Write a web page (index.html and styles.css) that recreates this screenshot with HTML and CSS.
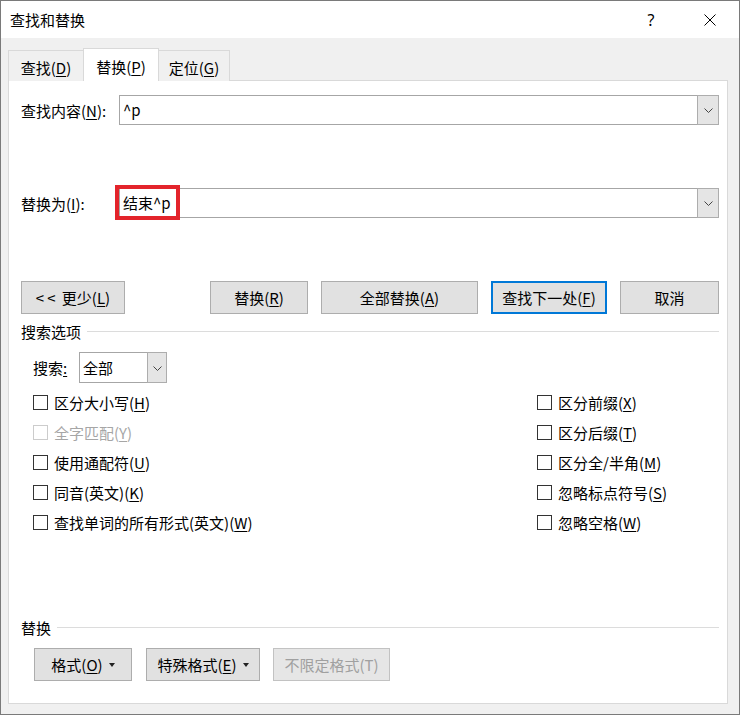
FILE: index.html
```html
<!DOCTYPE html>
<html lang="zh-CN">
<head>
<meta charset="utf-8">
<title>查找和替换</title>
<link rel="stylesheet" href="styles.css">
</head>
<body>
<div class="window">
  <div class="titlebar">
    <span class="title">查找和替换</span>
    <span class="help">?</span>
    <span class="close">
      <svg width="12" height="12" viewBox="0 0 12 12"><path d="M0.5 0.5 L11.5 11.5 M11.5 0.5 L0.5 11.5" stroke="#000" stroke-width="1" fill="none"/></svg>
    </span>
  </div>
  <div class="body">
    <div class="tabs">
      <div class="tab t1"><span>查找(<u>D</u>)</span></div>
      <div class="tab t2 active"><span>替换(<u>P</u>)</span></div>
      <div class="tab t3"><span>定位(<u>G</u>)</span></div>
    </div>
    <div class="panel">
      <div class="field-row">
        <div class="field-label">查找内容(<u>N</u>):</div>
        <div class="combo">
          <div class="val">^p</div>
          <div class="drop"><svg width="9" height="5" viewBox="0 0 9 5"><path d="M0.5 0.5 L4.5 4.5 L8.5 0.5" stroke="#444" stroke-width="1" fill="none"/></svg></div>
        </div>
      </div>
      <div class="field-row replace-row">
        <div class="field-label">替换为(<u>I</u>):</div>
        <div class="combo">
          <div class="val">结束^p</div>
          <div class="drop"><svg width="9" height="5" viewBox="0 0 9 5"><path d="M0.5 0.5 L4.5 4.5 L8.5 0.5" stroke="#444" stroke-width="1" fill="none"/></svg></div>
          <div class="mark"></div>
        </div>
      </div>
      <div class="btn-row">
        <div class="btn b-less"><span><span class="lt">&lt;&lt;</span> 更少(<u>L</u>)</span></div>
        <div class="btn b-rep"><span>替换(<u>R</u>)</span></div>
        <div class="btn b-all"><span>全部替换(<u>A</u>)</span></div>
        <div class="btn b-next focus"><span>查找下一处(<u>F</u>)</span></div>
        <div class="btn b-cancel"><span>取消</span></div>
      </div>
      <div class="group-head">
        <span>搜索选项</span><span class="line"></span>
      </div>
      <div class="search-row">
        <div class="search-label">搜索<u>:</u></div>
        <div class="select">
          <div class="val">全部</div>
          <div class="drop"><svg width="9" height="5" viewBox="0 0 9 5"><path d="M0.5 0.5 L4.5 4.5 L8.5 0.5" stroke="#444" stroke-width="1" fill="none"/></svg></div>
        </div>
      </div>
      <div class="checks">
        <div class="chk"><span class="box"></span><span>区分大小写(<u>H</u>)</span></div>
        <div class="chk disabled"><span class="box"></span><span>全字匹配(<u>Y</u>)</span></div>
        <div class="chk"><span class="box"></span><span>使用通配符(<u>U</u>)</span></div>
        <div class="chk"><span class="box"></span><span>同音(英文)(<u>K</u>)</span></div>
        <div class="chk"><span class="box"></span><span>查找单词的所有形式(英文)(<u>W</u>)</span></div>
        <div class="chk"><span class="box"></span><span>区分前缀(<u>X</u>)</span></div>
        <div class="chk"><span class="box"></span><span>区分后缀(<u>T</u>)</span></div>
        <div class="chk"><span class="box"></span><span>区分全/半角(<u>M</u>)</span></div>
        <div class="chk"><span class="box"></span><span>忽略标点符号(<u>S</u>)</span></div>
        <div class="chk"><span class="box"></span><span>忽略空格(<u>W</u>)</span></div>
      </div>
      <div class="group-head replace-head">
        <span>替换</span><span class="line"></span>
      </div>
      <div class="bottom-row">
        <div class="btn f1"><span>格式(<u>O</u>)</span><span class="tri"></span></div>
        <div class="btn f2"><span>特殊格式(<u>E</u>)</span><span class="tri"></span></div>
        <div class="btn f3 disabled"><span>不限定格式(T)</span></div>
      </div>
    </div>
  </div>
</div>
</body>
</html>
```
FILE: styles.css
```css
* { box-sizing: border-box; }
html, body { margin: 0; padding: 0; }
body {
  width: 740px;
  height: 716px;
  overflow: hidden;
  background: #fff;
  font-family: "Noto Sans CJK SC", sans-serif;
  font-size: 15px;
  color: #000;
}
u { text-underline-offset: 2px; text-decoration-thickness: 1px; }

.window {
  width: 740px;
  height: 715px;
  border: 1px solid #7a7a7a;
  display: flex;
  flex-direction: column;
}

.titlebar {
  height: 37px;
  flex: none;
  display: flex;
  align-items: center;
  padding-left: 9px;
  background: #fff;
}
.title { flex: 1; line-height: 20px; }
.help {
  font-family: "Noto Sans", sans-serif;
  font-size: 16px;
  width: 20px;
  text-align: center;
  margin-right: 43px;
  line-height: 20px;
}
.close {
  width: 12px;
  height: 12px;
  margin-right: 23px;
  display: flex;
}

.body {
  flex: 1;
  background: #f0f0f0;
  padding: 10px 11px 10px 7px;
  display: flex;
  flex-direction: column;
}

.tabs {
  display: flex;
  align-items: flex-end;
  height: 32px;
  flex: none;
}
.tab {
  height: 31px;
  border: 1px solid #d9d9d9;
  border-bottom: none;
  background: #f0f0f0;
  display: flex;
  align-items: center;
  justify-content: center;
  padding-top: 3px;
  margin-bottom: -1px;
  position: relative;
}
.tab + .tab { margin-left: -1px; }
.tab.t1 { width: 76px; }
.tab.t2 { width: 76px; }
.tab.t3 { width: 72px; }
.tab.active {
  height: 33px;
  background: #fff;
  z-index: 1;
  padding-top: 2px;
}

.panel {
  flex: 1;
  background: #fff;
  border: 1px solid #d9d9d9;
  padding: 14px 8px 0 12px;
  display: flex;
  flex-direction: column;
}

.field-row {
  display: flex;
  align-items: center;
  height: 30px;
  flex: none;
}
.replace-row { margin-top: 63px; }
.field-label { width: 98px; }

.combo, .select {
  position: relative;
  height: 30px;
  border: 1px solid #a6a6a6;
  display: flex;
  background: #fff;
}
.combo { flex: 1; }
.val {
  flex: 1;
  padding-left: 3px;
  line-height: 28px;
}
.drop {
  width: 22px;
  margin: -1px -1px -1px 0;
  border: 1px solid #adadad;
  background: #e5e5e5;
  display: flex;
  align-items: center;
  justify-content: center;
  padding-top: 1px;
}
.mark {
  position: absolute;
  left: -5px;
  top: -4px;
  width: 65px;
  height: 35px;
  border: 4px solid #e3242b;
}

.btn-row {
  margin-top: 63px;
  display: flex;
  gap: 13px;
  height: 33px;
  flex: none;
}
.btn {
  height: 33px;
  border: 1px solid #adadad;
  background: #e1e1e1;
  display: flex;
  align-items: center;
  justify-content: center;
}
.btn.focus { border: 2px solid #0078d7; }
.lt { letter-spacing: 3px; }
.b-less { width: 104px; margin-right: auto; }
.b-rep { width: 98px; }
.b-all { width: 157px; }
.b-next { width: 116px; }
.b-cancel { width: 99px; }

.group-head {
  margin-top: 7px;
  height: 20px;
  display: flex;
  align-items: center;
  gap: 6px;
  flex: none;
}
.group-head .line {
  flex: 1;
  height: 1px;
  background: #dcdcdc;
}
.replace-head { margin-top: 80px; }

.search-row {
  margin-top: 11px;
  padding-left: 12px;
  display: flex;
  align-items: center;
  height: 31px;
  flex: none;
}
.search-label { width: 46px; }
.select { width: 88px; height: 31px; }
.select .val { line-height: 29px; padding-left: 3px; }
.select .drop { width: 20px; }

.checks {
  margin-top: 4px;
  padding-left: 12px;
  display: grid;
  grid-template-columns: 504px 1fr;
  grid-template-rows: repeat(5, 30px);
  grid-auto-flow: column;
  flex: none;
}
.chk {
  display: flex;
  align-items: center;
  gap: 6px;
}
.box {
  width: 15px;
  height: 15px;
  border: 1px solid #333;
  background: #fff;
  flex: none;
}
.chk.disabled { color: #a6a6a6; }
.chk.disabled .box { border-color: #cccccc; }

.bottom-row {
  margin-top: 11px;
  padding-left: 13px;
  display: flex;
  gap: 13px;
  flex: none;
}
.f1 { width: 98px; margin-right: 1px; }
.f2 { width: 114px; }
.f3 { width: 117px; }
.btn.disabled {
  color: #a0a0a0;
  background: #e6e6e6;
  border-color: #c2c2c2;
}
.tri {
  width: 0;
  height: 0;
  border-left: 3.5px solid transparent;
  border-right: 3.5px solid transparent;
  border-top: 4px solid #222;
  margin-left: 6px;
}
```
